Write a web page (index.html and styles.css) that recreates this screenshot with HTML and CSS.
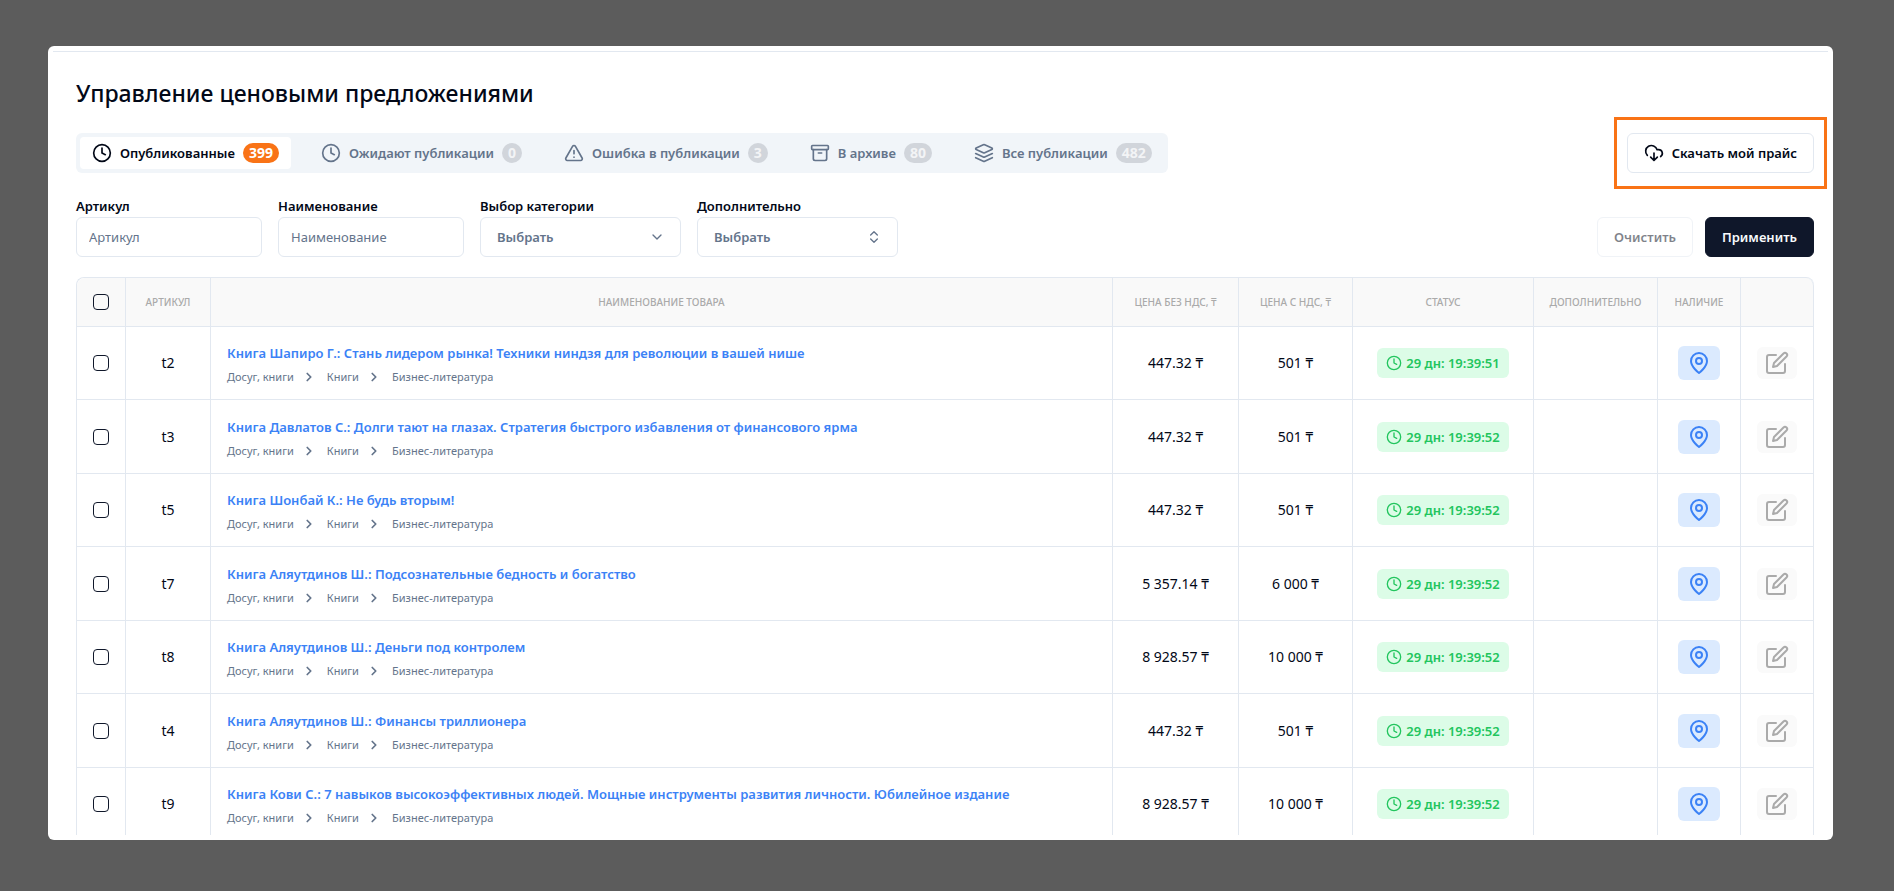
FILE: index.html
```html
<!DOCTYPE html>
<html lang="ru">
<head>
<meta charset="utf-8">
<title>Управление ценовыми предложениями</title>
<link rel="stylesheet" href="styles.css">
</head>
<body>
<svg class="sprite" aria-hidden="true">
  <symbol id="clock" viewBox="0 0 24 24"><circle cx="12" cy="12" r="10"/><path d="M12 6v6l4 2"/></symbol>
  <symbol id="alert" viewBox="0 0 24 24"><path d="m21.73 18-8-14a2 2 0 0 0-3.48 0l-8 14A2 2 0 0 0 4 21h16a2 2 0 0 0 1.73-3Z"/><path d="M12 9v4M12 17h.01"/></symbol>
  <symbol id="archive" viewBox="0 0 24 24"><rect x="2" y="3" width="20" height="5" rx="1"/><path d="M4 8v11a2 2 0 0 0 2 2h12a2 2 0 0 0 2-2V8M10 12h4"/></symbol>
  <symbol id="layers" viewBox="0 0 24 24"><path d="m12.83 2.18a2 2 0 0 0-1.66 0L2.6 6.08a1 1 0 0 0 0 1.83l8.58 3.91a2 2 0 0 0 1.66 0l8.58-3.9a1 1 0 0 0 0-1.83Z"/><path d="m22 17.65-9.17 4.16a2 2 0 0 1-1.66 0L2 17.65"/><path d="m22 12.65-9.17 4.16a2 2 0 0 1-1.66 0L2 12.65"/></symbol>
  <symbol id="download" viewBox="0 0 24 24"><path d="M4 14.899A7 7 0 1 1 15.71 8h1.79a4.5 4.5 0 0 1 2.5 8.242M12 12v9M8 17l4 4 4-4"/></symbol>
  <symbol id="down" viewBox="0 0 24 24"><path d="m6 9 6 6 6-6"/></symbol>
  <symbol id="updown" viewBox="0 0 24 24"><path d="m7 15 5 5 5-5M7 9l5-5 5 5"/></symbol>
  <symbol id="right" viewBox="0 0 24 24"><path d="m9 18 6-6-6-6"/></symbol>
  <symbol id="pin" viewBox="0 0 24 24"><path d="M20 10c0 6-8 12-8 12s-8-6-8-12a8 8 0 0 1 16 0Z"/><circle cx="12" cy="10" r="3"/></symbol>
  <symbol id="edit" viewBox="0 0 24 24"><path d="M11 4H4a2 2 0 0 0-2 2v14a2 2 0 0 0 2 2h14a2 2 0 0 0 2-2v-7"/><path d="M18.5 2.5a2.12 2.12 0 0 1 3 3L12 15l-4 1 1-4Z"/></symbol>
</svg>
<main class="card">
  <div class="content">
    <h1>Управление ценовыми предложениями</h1>
    <div class="toolbar">
      <nav class="tabs">
        <button class="tab active"><svg class="icon"><use href="#clock"/></svg>Опубликованные<span class="count">399</span></button>
        <button class="tab"><svg class="icon"><use href="#clock"/></svg>Ожидают публикации<span class="count">0</span></button>
        <button class="tab"><svg class="icon"><use href="#alert"/></svg>Ошибка в публикации<span class="count">3</span></button>
        <button class="tab"><svg class="icon"><use href="#archive"/></svg>В архиве<span class="count">80</span></button>
        <button class="tab"><svg class="icon"><use href="#layers"/></svg>Все публикации<span class="count">482</span></button>
      </nav>
      <div class="highlight"><button class="btn outline"><svg class="icon"><use href="#download"/></svg>Скачать мой прайс</button></div>
    </div>
    <form class="filters">
      <div class="field"><label for="sku">Артикул</label><input id="sku" type="text" placeholder="Артикул"></div>
      <div class="field"><label for="name">Наименование</label><input id="name" type="text" placeholder="Наименование"></div>
      <div class="field wide"><label for="cat">Выбор категории</label><div class="select"><select id="cat"><option>Выбрать</option></select><svg class="icon small"><use href="#down"/></svg></div></div>
      <div class="field wide"><label for="extra">Дополнительно</label><div class="select"><select id="extra"><option>Выбрать</option></select><svg class="icon small"><use href="#updown"/></svg></div></div>
      <div class="actions"><button type="reset" class="btn outline" disabled>Очистить</button><button type="button" class="btn primary">Применить</button></div>
    </form>
    <table>
      <colgroup><col class="c-check"><col class="c-sku"><col><col class="c-net"><col class="c-gross"><col class="c-status"><col class="c-extra"><col class="c-stock"><col class="c-edit"></colgroup>
      <thead><tr><th><input type="checkbox" aria-label="Выбрать все"></th><th>Артикул</th><th>Наименование товара</th><th>Цена без НДС, ₸</th><th>Цена с НДС, ₸</th><th>Статус</th><th>Дополнительно</th><th>Наличие</th><th></th></tr></thead>
      <tbody id="rows"></tbody>
    </table>
  </div>
</main>
<script src="app.js"></script>
</body>
</html>
```
FILE: app.js
```js
const items = [
  ["t2", "Книга Шапиро Г.: Стань лидером рынка! Техники ниндзя для революции в вашей нише", "447.32", "501", "19:39:51"],
  ["t3", "Книга Давлатов С.: Долги тают на глазах. Стратегия быстрого избавления от финансового ярма", "447.32", "501", "19:39:52"],
  ["t5", "Книга Шонбай К.: Не будь вторым!", "447.32", "501", "19:39:52"],
  ["t7", "Книга Аляутдинов Ш.: Подсознательные бедность и богатство", "5 357.14", "6 000", "19:39:52"],
  ["t8", "Книга Аляутдинов Ш.: Деньги под контролем", "8 928.57", "10 000", "19:39:52"],
  ["t4", "Книга Аляутдинов Ш.: Финансы триллионера", "447.32", "501", "19:39:52"],
  ["t9", "Книга Кови С.: 7 навыков высокоэффективных людей. Мощные инструменты развития личности. Юбилейное издание", "8 928.57", "10 000", "19:39:52"]
];
const icon = (name, cls) => `<svg class="icon ${cls}"><use href="#${name}"/></svg>`;
document.getElementById("rows").innerHTML = items.map(([sku, title, net, gross, time]) => `
  <tr>
    <td><input type="checkbox" aria-label="Выбрать ${sku}"></td>
    <td>${sku}</td>
    <td class="product"><a href="#">${title}</a>
      <div class="crumbs"><span>Досуг, книги</span>${icon("right", "tiny")}<span>Книги</span>${icon("right", "tiny")}<span>Бизнес-литература</span></div></td>
    <td>${net} ₸</td>
    <td>${gross} ₸</td>
    <td><span class="status">${icon("clock", "small")}29 дн: ${time}</span></td>
    <td></td>
    <td><button class="stock" aria-label="Наличие">${icon("pin", "large")}</button></td>
    <td><button class="edit" aria-label="Изменить">${icon("edit", "large")}</button></td>
  </tr>`).join("");
```
FILE: styles.css
```css
* { box-sizing: border-box; }
body {
  margin: 0;
  height: 100vh;
  padding: 46px 61px 51px 48px;
  background: #5c5c5c;
  color: #020817;
  font: 14px/20px "Noto Sans", "Open Sans", sans-serif;
}
button, input, select { font: inherit; color: inherit; }
.sprite { display: none; }
.icon {
  width: 20px;
  height: 20px;
  flex: none;
  fill: none;
  stroke: currentColor;
  stroke-width: 2;
  stroke-linecap: round;
  stroke-linejoin: round;
}
.icon.tiny { width: 14px; height: 14px; stroke-width: 3; }
.icon.small { width: 16px; height: 16px; }
.icon.large { width: 24px; height: 24px; }
.card { height: 100%; padding: 5px; background: #fff; border-radius: 6px; }
.content {
  height: 100%;
  padding: 25px 14px 0 23px;
  border-top: 1px solid #e2e8f0;
  overflow: hidden;
}
h1 { margin: 0 0 24px; font-size: 23px; line-height: 32px; font-weight: 500; }
.toolbar { display: flex; justify-content: space-between; align-items: center; height: 40px; }
.tabs { display: flex; gap: 18px; height: 40px; padding: 4px; background: #f1f5f9; border-radius: 6px; }
.tab {
  display: flex;
  align-items: center;
  gap: 8px;
  padding: 0 12px;
  border: 0;
  border-radius: 4px;
  background: none;
  color: #64748b;
  font-size: 13px;
  font-weight: 600;
  white-space: nowrap;
}
.tab.active { background: #fff; color: #020817; }
.count { padding: 0 6px; border-radius: 10px; background: #d1d5db; color: #f3f4f6; font-size: 14px; font-weight: 700; }
.active .count { background: #f97316; color: #fff; }
.highlight { margin-right: -13px; padding: 13px 10px; border: 3px solid #f97316; }
.btn {
  display: flex;
  align-items: center;
  gap: 8px;
  height: 40px;
  padding: 0 16px;
  border: 1px solid #e2e8f0;
  border-radius: 6px;
  background: #fff;
  font-size: 13px;
  font-weight: 600;
  white-space: nowrap;
}
.btn:disabled { opacity: .5; }
.btn.primary { background: #0f172a; border-color: #0f172a; color: #f8fafc; }
.filters { display: flex; align-items: flex-end; gap: 16px; margin: 23px 0 20px; }
.field { width: 186px; }
.field.wide { width: 201px; }
.field label { display: block; margin-bottom: 1px; font-size: 13px; font-weight: 600; }
.field input, .select select {
  display: block;
  width: 100%;
  height: 40px;
  padding: 0 12px;
  border: 1px solid #e2e8f0;
  border-radius: 6px;
  background: #fff;
  font-size: 13px;
}
.field input::placeholder { color: #64748b; opacity: 1; }
.select { position: relative; }
.select select { appearance: none; padding: 0 16px; color: #64748b; font-weight: 600; }
.select .icon { position: absolute; right: 16px; top: 12px; color: #64748b; pointer-events: none; }
.actions { display: flex; gap: 12px; margin-left: auto; }
table {
  width: 100%;
  table-layout: fixed;
  border-collapse: separate;
  border-spacing: 0;
  border: 1px solid #e2e8f0;
  border-right: 0;
  border-radius: 8px 8px 0 0;
}
.c-check { width: 49px; }
.c-sku { width: 85px; }
.c-net { width: 126px; }
.c-gross { width: 114px; }
.c-status { width: 181px; }
.c-extra { width: 124px; }
.c-stock { width: 83px; }
.c-edit { width: 73px; }
th, td { padding: 0; border: 0 solid #e2e8f0; border-width: 0 1px 1px 0; text-align: center; vertical-align: middle; }
th { height: 49px; background: #f9f9f9; color: #aaa; font-size: 10px; font-weight: 500; text-transform: uppercase; white-space: nowrap; }
th:first-child { border-top-left-radius: 8px; }
th:last-child { border-top-right-radius: 8px; }
tbody tr { height: 73px; }
tbody tr:nth-child(even) { height: 74px; }
input[type=checkbox] {
  appearance: none;
  display: block;
  width: 16px;
  height: 16px;
  margin: 0 auto;
  border: 1px solid #0f172a;
  border-radius: 4px;
}
.product { padding: 4px 16px 0; text-align: left; white-space: nowrap; }
.product a { color: #3b82f6; font-size: 13px; font-weight: 600; text-decoration: none; }
.crumbs { display: flex; align-items: center; margin-top: 4px; color: #64748b; font-size: 11px; line-height: 20px; }
.crumbs .icon { margin: 0 11px 0 8px; }
.status {
  display: inline-flex;
  align-items: center;
  gap: 4px;
  height: 30px;
  padding: 0 9px;
  border-radius: 6px;
  background: #dcfce7;
  color: #22c55e;
  font-size: 13px;
  font-weight: 600;
  white-space: nowrap;
}
.stock, .edit { display: flex; align-items: center; justify-content: center; margin: 0 auto; border: 0; border-radius: 6px; padding: 0; }
.stock { width: 42px; height: 34px; background: #dbeafe; color: #3b82f6; }
.edit { width: 40px; height: 32px; background: #fafafa; color: #aaa; }
```
